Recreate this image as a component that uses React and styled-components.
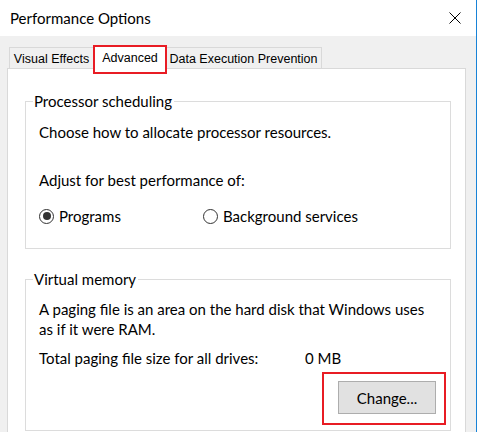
import React from 'react'
import styled, { createGlobalStyle } from 'styled-components'

const GlobalStyle = createGlobalStyle`
  html, body {
    margin: 0;
    padding: 0;
    background: #f0f0f0;
  }
  * { box-sizing: border-box; }
`

const Window = styled.div`
  width: 477px;
  height: 432px;
  overflow: hidden;
  background: #f0f0f0;
  border-right: 1px solid #1883d7;
  font-family: Lato, "Noto Sans", sans-serif;
  font-size: 15px;
  color: #000;
  display: flex;
  flex-direction: column;
`

const TitleBar = styled.div`
  height: 36px;
  flex: none;
  background: #fff;
  display: flex;
  align-items: center;
  justify-content: space-between;
  padding: 0 15px 0 10px;
`

const Title = styled.span`
  font-size: 15px;
  line-height: 20px;
`

const CloseButton = styled.button`
  border: 0;
  background: none;
  padding: 0;
  width: 12px;
  height: 12px;
  display: flex;
  cursor: default;
`

const Body = styled.div`
  flex: 1;
  padding: 9px 10px 0 7px;
  display: flex;
  flex-direction: column;
`

const TabStrip = styled.div`
  display: flex;
  align-items: flex-end;
  height: 24px;
  padding-left: 2px;
  position: relative;
  z-index: 1;
  margin-bottom: -1px;
`

const Tab = styled.div`
  position: relative;
  width: ${p => p.w}px;
  height: ${p => (p.active ? 24 : 22)}px;
  margin: ${p => (p.active ? '0 -1px' : '0')};
  background: ${p => (p.active ? '#fff' : '#f0f0f0')};
  border: 1px solid #d9d9d9;
  border-bottom: ${p => (p.active ? '0' : '1px solid #d9d9d9')};
  border-left: ${p => (p.noLeft ? '0' : '1px solid #d9d9d9')};
  font-family: "Liberation Sans", Arial, sans-serif;
  font-size: 12.5px;
  display: flex;
  align-items: center;
  justify-content: center;
  padding-top: ${p => (p.active ? '0' : '2px')};
  z-index: ${p => (p.active ? 2 : 1)};

  ${p => p.marked && `
    &::after {
      content: '';
      position: absolute;
      left: -1px;
      right: -1px;
      top: -1px;
      bottom: -5px;
      border: 2px solid #e81c24;
    }
  `}
`

const Panel = styled.div`
  flex: 1;
  background: #fff;
  border: 1px solid #d9d9d9;
  border-bottom: 0;
  padding: 22px 14px 0 17px;
  display: flex;
  flex-direction: column;
  gap: 20px;
`

const Group = styled.fieldset`
  margin: 0;
  border: 1px solid #dcdcdc;
  padding: 0 14px ${p => p.pb}px 13px;
  min-width: 0;
`

const Legend = styled.legend`
  padding: 0 2px 0 1px;
  margin-left: -6px;
  line-height: 20px;
`

const Text = styled.p`
  margin: ${p => p.mt}px 0 0;
  line-height: 20px;
`

const RadioRow = styled.div`
  margin-top: 16px;
  display: grid;
  grid-template-columns: 164px auto;
  height: 20px;
`

const RadioOption = styled.label`
  display: flex;
  align-items: center;
  gap: 5px;
  line-height: 20px;
`

const RadioCircle = styled.span`
  width: 15px;
  height: 15px;
  border-radius: 50%;
  border: 1px solid #333;
  display: flex;
  align-items: center;
  justify-content: center;
  flex: none;

  &::before {
    content: '';
    width: 8px;
    height: 8px;
    border-radius: 50%;
    background: ${p => (p.checked ? '#333' : 'transparent')};
  }
`

const SizeRow = styled.div`
  margin-top: 9px;
  display: grid;
  grid-template-columns: 266px auto;
  line-height: 20px;
`

const ButtonRow = styled.div`
  margin-top: 13px;
  display: flex;
  justify-content: flex-end;
`

const Marked = styled.div`
  position: relative;

  &::after {
    content: '';
    position: absolute;
    left: -16px;
    right: -10px;
    top: -9px;
    bottom: -11px;
    border: 2px solid #e81c24;
    pointer-events: none;
  }
`

const Button = styled.button`
  width: 98px;
  height: 33px;
  background: #e1e1e1;
  border: 1px solid #adadad;
  font-family: inherit;
  font-size: 15px;
  color: #000;
  padding: 0;
`

export default function App() {
  return (
    <>
      <GlobalStyle />
      <Window>
        <TitleBar>
          <Title>Performance Options</Title>
          <CloseButton aria-label="Close">
            <svg width="12" height="12" viewBox="0 0 12 12">
              <path d="M0.5 0.5 L11.5 11.5 M11.5 0.5 L0.5 11.5" stroke="#000" strokeWidth="1" fill="none" />
            </svg>
          </CloseButton>
        </TitleBar>
        <Body>
          <TabStrip>
            <Tab w={85}>Visual Effects</Tab>
            <Tab w={74} active marked>Advanced</Tab>
            <Tab w={156} noLeft>Data Execution Prevention</Tab>
          </TabStrip>
          <Panel>
            <Group pb={22}>
              <Legend>Processor scheduling</Legend>
              <Text mt={11}>Choose how to allocate processor resources.</Text>
              <Text mt={28}>Adjust for best performance of:</Text>
              <RadioRow>
                <RadioOption>
                  <RadioCircle checked />
                  Programs
                </RadioOption>
                <RadioOption>
                  <RadioCircle />
                  Background services
                </RadioOption>
              </RadioRow>
            </Group>
            <Group pb={16}>
              <Legend>Virtual memory</Legend>
              <Text mt={10}>
                A paging file is an area on the hard disk that Windows uses
                <br />
                as if it were RAM.
              </Text>
              <SizeRow>
                <span>Total paging file size for all drives:</span>
                <span>0 MB</span>
              </SizeRow>
              <ButtonRow>
                <Marked>
                  <Button>Change...</Button>
                </Marked>
              </ButtonRow>
            </Group>
          </Panel>
        </Body>
      </Window>
    </>
  )
}
